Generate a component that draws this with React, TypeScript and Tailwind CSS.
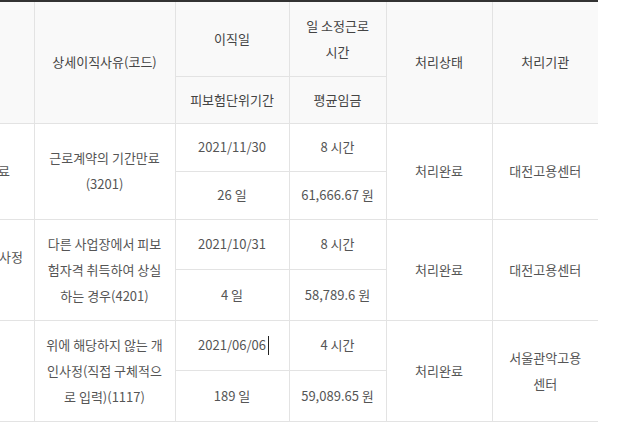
import React from "react";

const font = { fontFamily: '"Noto Sans CJK KR", "Noto Sans", sans-serif' };

const V = "border-l border-[#d2d2d2]";
const H = "border-b border-[#e3e3e3]";

function FirstCell({ children, pr, twoLine }: { children: React.ReactNode; pr: string; twoLine?: boolean }) {
  return (
    <td rowSpan={2} className={`${H} p-0 align-middle`}>
      <div className="w-[34px] overflow-hidden">
        <div className={`flex flex-col items-end ${pr} whitespace-nowrap`}>
          <div>{children}</div>
          {twoLine ? <div className="h-[26px]" /> : null}
        </div>
      </div>
    </td>
  );
}

export default function App() {
  const rows = [
    {
      first: "기간만료",
      pr: "pr-[24px]",
      two: false,
      reason: (
        <>
          근로계약의 기간만료
          <br />
          (3201)
        </>
      ),
      date: "2021/11/30",
      hours: "8 시간",
      days: "26 일",
      wage: "61,666.67 원",
      org: "대전고용센터",
      caret: false,
    },
    {
      first: "개인사정",
      pr: "pr-[11px]",
      two: true,
      reason: (
        <>
          다른 사업장에서 피보
          <br />
          험자격 취득하여 상실
          <br />
          하는 경우(4201)
        </>
      ),
      date: "2021/10/31",
      hours: "8 시간",
      days: "4 일",
      wage: "58,789.6 원",
      org: "대전고용센터",
      caret: false,
    },
    {
      first: "",
      pr: "pr-[11px]",
      two: false,
      reason: (
        <>
          위에 해당하지 않는 개
          <br />
          인사정(직접 구체적으
          <br />
          로 입력)(1117)
        </>
      ),
      date: "2021/06/06",
      hours: "4 시간",
      days: "189 일",
      wage: "59,089.65 원",
      org: (
        <>
          서울관악고용
          <br />
          센터
        </>
      ),
      caret: true,
    },
  ];

  return (
    <div className="w-[631px] h-[436px] bg-white overflow-hidden" style={font}>
      <table className="w-[598px] table-fixed border-collapse text-[13px] leading-[26px] text-center text-[#555]">
        <colgroup>
          <col className="w-[34px]" />
          <col className="w-[141px]" />
          <col className="w-[114px]" />
          <col className="w-[97px]" />
          <col className="w-[106px]" />
          <col className="w-[106px]" />
        </colgroup>
        <thead className="bg-[#f9f9f9] text-[#444]">
          <tr className="h-[75px] border-t-2 border-[#333]">
            <th rowSpan={2} className={`${H} font-normal`}></th>
            <th rowSpan={2} className={`${V} ${H} font-normal`}>상세이직사유(코드)</th>
            <th className={`${V} ${H} font-normal`}>이직일</th>
            <th className={`${V} ${H} font-normal`}>
              일 소정근로
              <br />
              시간
            </th>
            <th rowSpan={2} className={`${V} ${H} font-normal`}>처리상태</th>
            <th rowSpan={2} className={`${V} ${H} font-normal`}>처리기관</th>
          </tr>
          <tr className="h-[47px]">
            <th className={`${V} ${H} font-normal`}>피보험단위기간</th>
            <th className={`${V} ${H} font-normal`}>평균임금</th>
          </tr>
        </thead>
        <tbody>
          {rows.map((r, i) => (
            <React.Fragment key={i}>
              <tr className="h-[48px]">
                <FirstCell pr={r.pr} twoLine={r.two}>
                  {r.first}
                </FirstCell>
                <td rowSpan={2} className={`${V} ${H} px-[10px] py-[11px]`}>
                  {r.reason}
                </td>
                <td className={`${V} ${H}`}>
                  <span className="relative">
                    {r.date}
                    {r.caret ? (
                      <span className="absolute right-[-3px] top-[1px] w-px h-[19px] bg-[#222]" />
                    ) : null}
                  </span>
                </td>
                <td className={`${V} ${H}`}>{r.hours}</td>
                <td rowSpan={2} className={`${V} ${H}`}>처리완료</td>
                <td rowSpan={2} className={`${V} ${H}`}>{r.org}</td>
              </tr>
              <tr className="h-[48px]">
                <td className={`${V} ${H}`}>{r.days}</td>
                <td className={`${V} ${H}`}>{r.wage}</td>
              </tr>
            </React.Fragment>
          ))}
        </tbody>
      </table>
    </div>
  );
}
